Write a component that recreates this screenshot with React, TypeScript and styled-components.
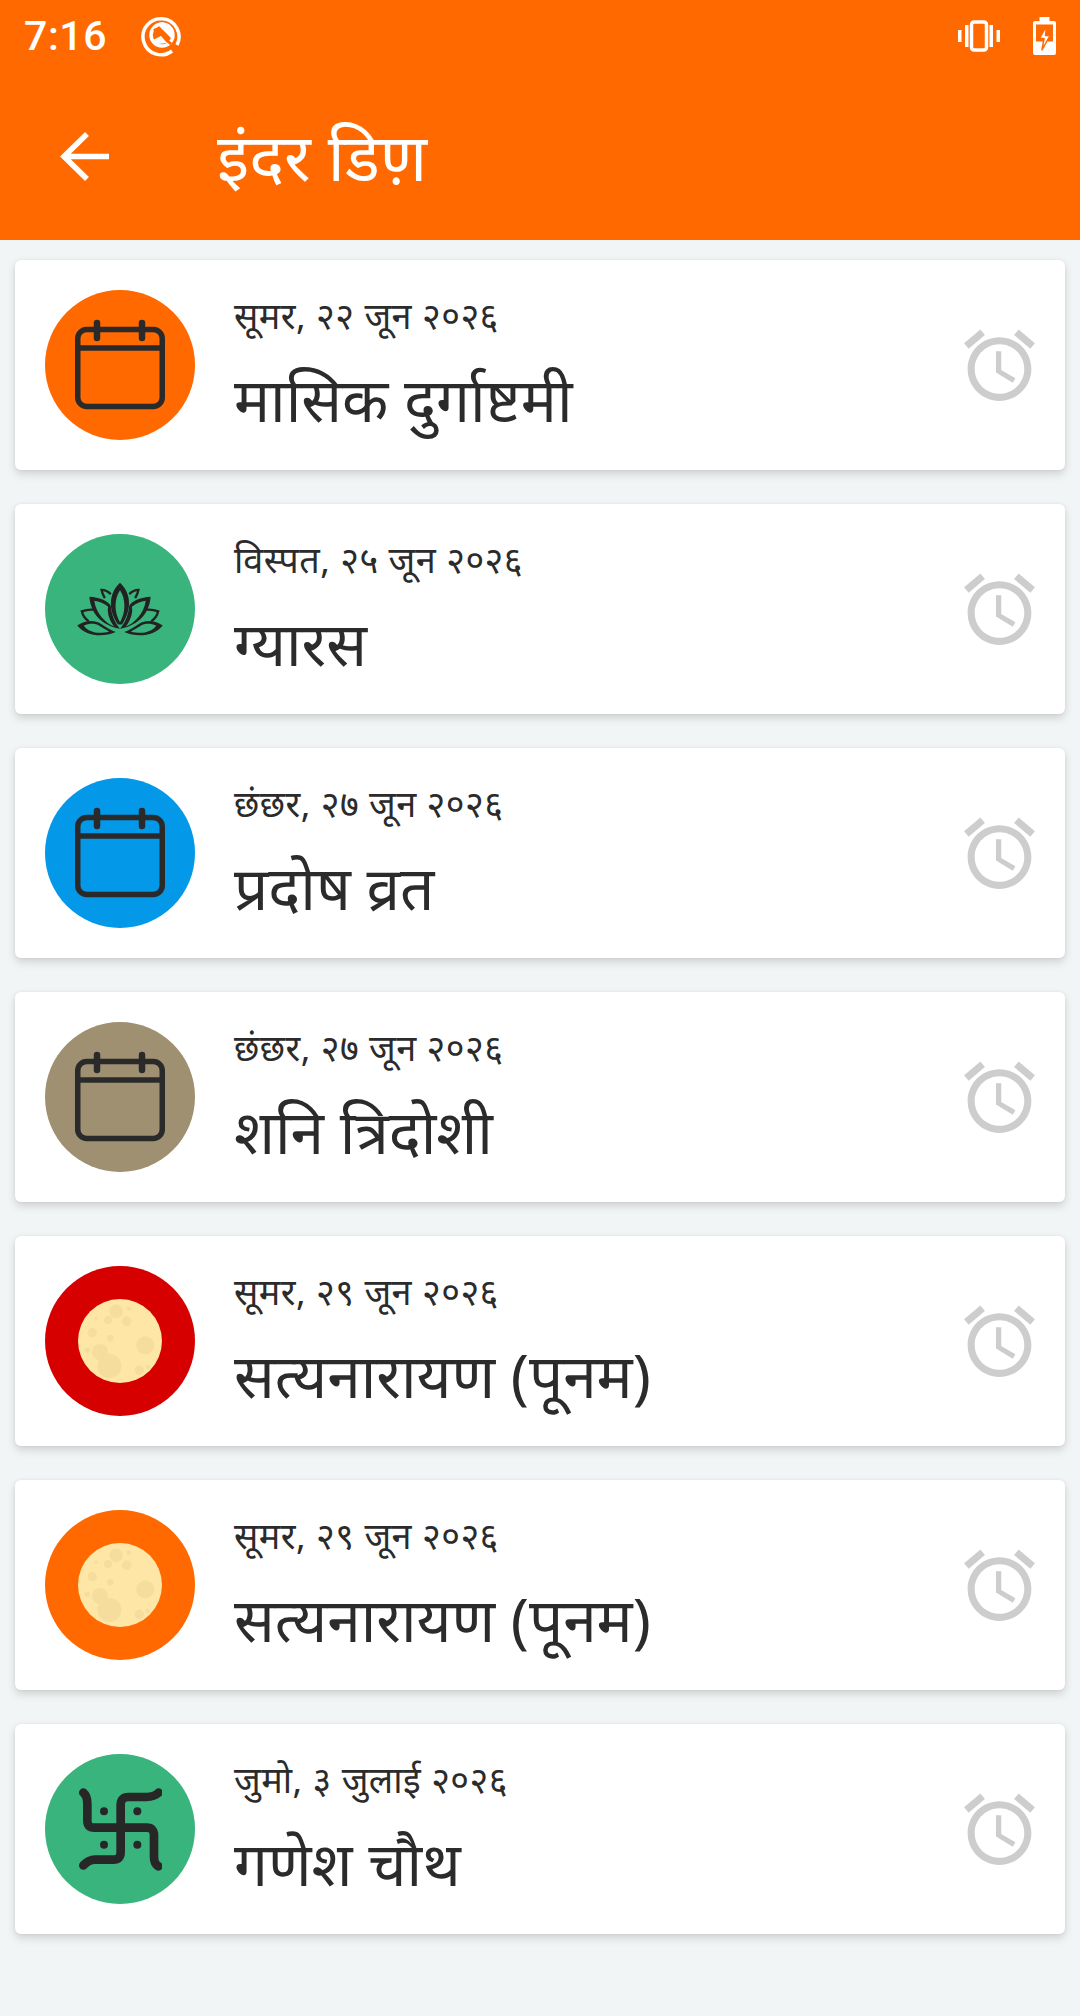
import React from "react";
import styled, { createGlobalStyle } from "styled-components";

const Global = createGlobalStyle`
  html, body { margin: 0; padding: 0; background: #f2f5f6; }
  body { font-family: "Noto Sans", "Noto Sans Devanagari", "Lohit Devanagari", "Roboto", "DejaVu Sans", sans-serif; }
`;
const Page = styled.div`
  width: 1080px; height: 2016px; background: #f2f5f6; overflow: hidden;
  display: flex; flex-direction: column;
`;
const Header = styled.header`
  height: 240px; background: #ff6900; color: #fff;
  display: flex; flex-direction: column; flex-shrink: 0;
`;
const StatusBar = styled.div`
  height: 72px; display: flex; align-items: center; padding: 0 24px; gap: 34px;
`;
const Time = styled.span`
  font: 500 41px/72px Roboto, sans-serif; letter-spacing: 0.6px; color: #fff;
`;
const Spacer = styled.div` flex: 1; `;
const StatusIcons = styled.div` display: flex; align-items: center; gap: 33px; `;
const AppBar = styled.div`
  flex: 1; display: flex; align-items: center; padding: 0 0 0 60px; gap: 108px;
`;
const Title = styled.h1`
  margin: 0; font-size: 65.5px; line-height: 80px; font-weight: 400; color: #fff;
`;
const List = styled.main`
  display: flex; flex-direction: column; gap: 34px; padding: 20px 15px 0;
`;
const Card = styled.article`
  height: 210px; background: #fff; border-radius: 6px; box-sizing: border-box;
  box-shadow: 0 4px 8px rgba(0,0,0,.15), 0 0 3px rgba(0,0,0,.06);
  display: flex; align-items: center; padding: 0 23px 0 30px;
`;
const Badge = styled.div<{ $bg: string }>`
  width: 150px; height: 150px; border-radius: 50%; background: ${p => p.$bg};
  flex-shrink: 0; display: flex; align-items: center; justify-content: center;
`;
const Texts = styled.div`
  flex: 1; margin-left: 39px; padding-top: 2px; display: flex; flex-direction: column; color: #2b2b2b;
`;
const DateLine = styled.div` font-size: 36px; line-height: 48px; letter-spacing: 0.5px; `;
const Name = styled.div` font-size: 60.3px; line-height: 84px; margin-top: 17px; `;
const Ink = "#2a2a2a";

const CalendarIcon = () => (
  <svg width="100" height="100" viewBox="0 0 100 100" fill="none" stroke={Ink} strokeWidth="5.5">
    <rect x="7.750" y="14.500" width="84.500" height="77" rx="9" />
    <path d="M8 33h84" />
    <path d="M27 8v15M72 8v15" strokeLinecap="round" strokeWidth="6.500" />
  </svg>
);
const lotusHalf = (
  <>
    <path fillRule="evenodd" d="M175 228C205 230 230 240 240 255C242 285 255 310 268 325C225 318 180 290 175 228ZM190 240C195 280 225 308 250 318C235 298 228 275 232 258C220 248 205 242 190 240Z" />
    <path fillRule="evenodd" d="M138 315C165 298 190 298 210 310C225 320 240 330 255 335C215 352 165 348 138 315ZM158 316C175 308 192 308 205 316C215 322 225 328 235 333C205 342 175 338 158 316Z" />
    <path fill="none" stroke="#222" strokeWidth="7" d="M222 232C216 222 213 214 212 207C222 207 232 212 240 220" />
    <path fill="none" stroke="#222" strokeWidth="7" d="M187 267C175 266 163 268 152 272C155 285 162 295 173 302" />
  </>
);
const LotusIcon = () => (
  <svg width="88" height="54" viewBox="136 183 264 164" fill="#222">
    <path fillRule="evenodd" d="M268 185C235 215 230 265 262 312L274 312C306 265 301 215 268 185ZM268 208C250 235 250 275 268 305C286 275 286 235 268 208Z" />
    {lotusHalf}
    <g transform="matrix(-1 0 0 1 536 0)">{lotusHalf}</g>
  </svg>
);
const MoonIcon = () => (
  <svg width="84" height="84" viewBox="0 0 84 84">
    <circle cx="42" cy="42" r="42" fill="#fde6a6" />
    <g fill="#f4dd9d">
      <circle cx="38" cy="12.300" r="6.700" /><circle cx="30" cy="21" r="4" /><circle cx="48.700" cy="22.300" r="4.700" />
      <circle cx="14.300" cy="33.700" r="4.700" /><circle cx="32.300" cy="39.300" r="3.300" /><circle cx="67.300" cy="46.300" r="9" />
      <circle cx="22" cy="53" r="8" /><circle cx="31.300" cy="67" r="12" /><circle cx="61.300" cy="71.300" r="4.700" />
      <circle cx="69.700" cy="68" r="2.300" /><circle cx="9.300" cy="51.300" r="2.700" /><circle cx="18" cy="19.300" r="1.700" /><circle cx="51" cy="9.700" r="2.300" />
    </g>
  </svg>
);
const SwastikaIcon = () => (
  <svg width="84" height="84" viewBox="144 140 252 252" fill="none" stroke="#272727" strokeWidth="26" strokeLinecap="round" strokeLinejoin="round">
    <path d="M160 157C170 165 172 175 172 190V240C172 255 178 262 193 262H350C365 262 372 270 372 285V350C372 365 375 372 385 378" />
    <path d="M386 157C375 167 365 170 350 170H296C280 170 272 178 272 194V335C272 350 265 358 250 358H195C180 358 170 365 160 375" />
    <g fill="#272727" stroke="none">
      <circle cx="222" cy="213" r="12" /><circle cx="322" cy="213" r="12" /><circle cx="222" cy="313" r="12" /><circle cx="322" cy="313" r="12" />
    </g>
  </svg>
);
const AlarmIcon = () => (
  <svg width="85" height="85" viewBox="0 0 24 24" fill="#cdcdcd">
    <path d="M22 5.720l-4.600-3.860-1.290 1.530 4.600 3.860L22 5.720zM7.880 3.390L6.600 1.860 2 5.710l1.290 1.530 4.590-3.850zM12.500 8H11v6l4.750 2.850.75-1.230-4-2.370V8zM12 4c-4.970 0-9 4.030-9 9s4.030 9 9 9 9-4.030 9-9-4.030-9-9-9zm0 16c-3.870 0-7-3.130-7-7s3.130-7 7-7 7 3.130 7 7-3.130 7-7 7z" />
  </svg>
);

const items = [
  { date: "सूमर, २२ जून २०२६", name: "मासिक दुर्गाष्टमी", bg: "#ff6900", icon: <CalendarIcon /> },
  { date: "विस्पत, २५ जून २०२६", name: "ग्यारस", bg: "#38b47c", icon: <LotusIcon /> },
  { date: "छंछर, २७ जून २०२६", name: "प्रदोष व्रत", bg: "#0398e8", icon: <CalendarIcon /> },
  { date: "छंछर, २७ जून २०२६", name: "शनि त्रिदोशी", bg: "#a09072", icon: <CalendarIcon /> },
  { date: "सूमर, २९ जून २०२६", name: "सत्यनारायण (पूनम)", bg: "#d60000", icon: <MoonIcon /> },
  { date: "सूमर, २९ जून २०२६", name: "सत्यनारायण (पूनम)", bg: "#ff6900", icon: <MoonIcon /> },
  { date: "जुमो, ३ जुलाई २०२६", name: "गणेश चौथ", bg: "#38b47c", icon: <SwastikaIcon /> },
];

export default function App() {
  return (
    <Page>
      <Global />
      <Header>
        <StatusBar>
          <Time>7:16</Time>
          <svg width="42" height="42" viewBox="0 0 42 42" fill="none" stroke="#fff" strokeWidth="3.500">
            <path d="M36 30A18 18 0 1 0 31 36" />
            <circle cx="21" cy="20" r="11" />
            <path d="M13 14L30 29" strokeWidth="3" stroke="#ff6900" />
            <path d="M16 9a11 11 0 0 1 15 15z" fill="#fff" stroke="none" />
            <path d="M12 25l8-4 6 7-9 1z" fill="#fff" stroke="none" />
          </svg>
          <Spacer />
          <StatusIcons>
            <svg width="42" height="32" viewBox="0 0 42 32" fill="#fff">
              <path d="M0 10h3.500v12H0zM7 5h3.500v22H7zM31.500 5H35v22h-3.500zM38.500 10H42v12h-3.500z" />
              <rect x="13.500" y="2" width="15" height="28" rx="2.500" fill="none" stroke="#fff" strokeWidth="3.500" />
            </svg>
            <svg width="23" height="38" viewBox="0 0 23 38">
              <path d="M6.500 0h10v4H21a2 2 0 0 1 2 2v30a2 2 0 0 1-2 2H2a2 2 0 0 1-2-2V6a2 2 0 0 1 2-2h4.500z" fill="#fff" />
              <path d="M3 7.500h17v17H3z" fill="#ff6900" />
              <path d="M13.500 9L6.500 21.500h4.500L9 33l8-14.500h-4.500z" fill="#fff" stroke="#ff6900" strokeWidth="1.500" strokeLinejoin="round" />
            </svg>
          </StatusIcons>
        </StatusBar>
        <AppBar>
          <svg width="49" height="49" viewBox="0 0 49 49" fill="none" stroke="#fff" strokeWidth="5.500">
            <path d="M49 24.500H4M27 2L4 24.500 27 47" />
          </svg>
          <Title>इंदर डिण़</Title>
        </AppBar>
      </Header>
      <List>
        {items.map((it, i) => (
          <Card key={i}>
            <Badge $bg={it.bg}>{it.icon}</Badge>
            <Texts>
              <DateLine>{it.date}</DateLine>
              <Name>{it.name}</Name>
            </Texts>
            <AlarmIcon />
          </Card>
        ))}
      </List>
    </Page>
  );
}
